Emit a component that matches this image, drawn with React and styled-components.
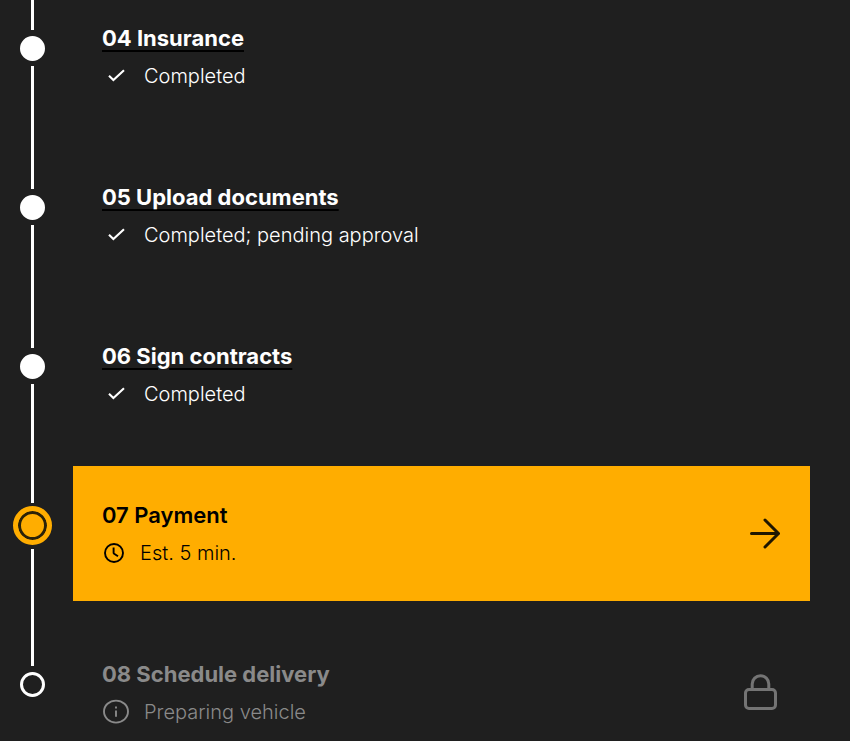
import React from 'react'
import styled, { createGlobalStyle } from 'styled-components'

const steps = [
  { id: 'insurance', title: '04 Insurance', state: 'done', note: 'Completed' },
  { id: 'documents', title: '05 Upload documents', state: 'done', note: 'Completed; pending approval' },
  { id: 'contracts', title: '06 Sign contracts', state: 'done', note: 'Completed' },
  { id: 'payment', title: '07 Payment', state: 'active', note: 'Est. 5 min.' },
  { id: 'delivery', title: '08 Schedule delivery', state: 'locked', note: 'Preparing vehicle' },
]

const CheckIcon = () => (
  <svg width="28" height="28" viewBox="0 0 28 28" fill="none" stroke="currentColor" strokeWidth="2.1" aria-hidden="true">
    <path d="M7 13.8l4.4 4.3L22 8.2" />
  </svg>
)

const ClockIcon = () => (
  <svg width="24" height="24" viewBox="0 0 24 24" fill="none" stroke="currentColor" strokeWidth="1.9" aria-hidden="true">
    <circle cx="12" cy="12" r="9" />
    <path d="M11.6 6.4v5.4c0 .4.2.7.5.9l3.9 2.6" />
  </svg>
)

const InfoIcon = () => (
  <svg width="28" height="28" viewBox="0 0 28 28" fill="none" stroke="currentColor" strokeWidth="1.9" aria-hidden="true">
    <ellipse cx="14" cy="13.6" rx="12" ry="11" />
    <path d="M14 12.4v6.4M14 8.4v2" />
  </svg>
)

const ArrowIcon = () => (
  <svg width="32" height="32" viewBox="0 0 32 32" fill="none" stroke="#1f1600" strokeWidth="3" strokeLinecap="round" strokeLinejoin="round" aria-hidden="true">
    <path d="M3.5 15.5h27M17 2l13.5 13.5L17 29" />
  </svg>
)

const LockIcon = () => (
  <svg width="40" height="40" viewBox="0 0 40 40" fill="none" stroke="currentColor" strokeWidth="3" aria-hidden="true">
    <rect x="5.5" y="16.5" width="30" height="19" rx="3.5" />
    <path d="M12.2 16.5V11a8.3 8.3 0 0 1 16.6 0v5.5" />
  </svg>
)

const noteIcons = { done: CheckIcon, active: ClockIcon, locked: InfoIcon }

const Step = ({ step }) => {
  const { id, title, state, note } = step
  const NoteIcon = noteIcons[state]

  return (
    <Row>
      <Rail>
        <Lead $state={state} />
        <Dot $state={state} />
        {state !== 'locked' && <Line />}
      </Rail>
      <Card as={state === 'active' ? 'a' : 'div'} href={state === 'active' ? `#${id}` : undefined} $state={state}>
        <Body>
          <Title $state={state}>
            {state === 'done' ? <TitleLink href={`#${id}`}>{title}</TitleLink> : title}
          </Title>
          <Note>
            <NoteIcon />
            {note}
          </Note>
        </Body>
        {state === 'active' && <ArrowIcon />}
        {state === 'locked' && <Lock><LockIcon /></Lock>}
      </Card>
    </Row>
  )
}

export default function App() {
  return (
    <>
      <GlobalStyle />
      <Page>
        <Steps>
          {steps.map(step => <Step key={step.id} step={step} />)}
        </Steps>
      </Page>
    </>
  )
}

const GlobalStyle = createGlobalStyle`
  *, *::before, *::after {
    box-sizing: border-box;
  }

  body {
    margin: 0;
    background: #1f1f1f;
    color: #fff;
    font-family: Inter, 'Liberation Sans', sans-serif;
  }
`

const Page = styled.main`
  height: 100vh;
  overflow-y: auto;
  scrollbar-width: none;
`

const Steps = styled.ol`
  margin: 0;
  padding: 0 40px 0 13px;
  list-style: none;
`

const Lead = styled.span`
  width: 3px;
  height: ${p => (p.$state === 'active' ? 37 : 41)}px;
  background: #fff;
`

const Line = styled.span`
  flex: 1;
  width: 3px;
  background: #fff;
`

const Rail = styled.div`
  display: flex;
  flex-direction: column;
  align-items: center;
  width: 39px;
`

const Dot = styled.span`
  width: 25px;
  height: 25px;
  margin: 6px 0 5px;
  border-radius: 50%;
  background: ${p => (p.$state === 'done' ? '#fff' : 'transparent')};
  border: 3px solid #fff;

  ${p => p.$state === 'active' && `
    width: 39px;
    height: 39px;
    margin: 3px 0 4px;
    border: 5px solid #ffad00;
    background: #ffad00;
    box-shadow: inset 0 0 0 3px #2b2208;
  `}
`

const Card = styled.div`
  flex: 1;
  display: flex;
  align-items: center;
  justify-content: space-between;
  margin-bottom: 24px;
  padding: 35px 30px 34px 29px;
  color: ${p => ({ done: '#fff', active: '#000', locked: '#8a8a8a' }[p.$state])};
  background: ${p => (p.$state === 'active' ? '#ffad00' : 'transparent')};
  text-decoration: none;
`

const Row = styled.li`
  display: flex;
  gap: 21px;

  /* the list starts partway through the first step */
  &:first-child ${Card} {
    padding-top: 24px;
  }

  &:first-child ${Lead} {
    height: 30px;
  }
`

const Body = styled.div`
  display: flex;
  flex-direction: column;
  gap: 10px;
`

const Title = styled.h2`
  margin: 0;
  font-size: 22px;
  font-weight: ${p => (p.$state === 'active' ? 600 : 700)};
  line-height: 28px;
`

const TitleLink = styled.a`
  color: inherit;
  text-decoration: underline 2px #000;
  text-underline-offset: 4px;
`

const Note = styled.p`
  display: flex;
  align-items: center;
  gap: 14px;
  margin: 0;
  font-size: 20px;
  font-weight: 300;
  line-height: 28px;
`

const Lock = styled.span`
  display: flex;
  color: #747474;
`
